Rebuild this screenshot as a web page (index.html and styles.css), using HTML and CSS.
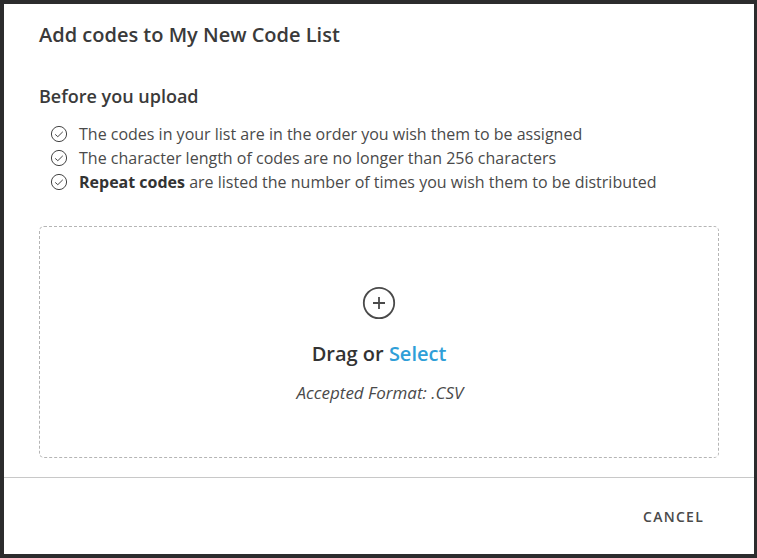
FILE: index.html
```html
<!DOCTYPE html>
<html lang="en">
<head>
<meta charset="utf-8">
<title>Add codes</title>
<link rel="stylesheet" href="styles.css">
</head>
<body>
<main class="dialog">
  <section class="content">
    <h1 class="title">Add codes to My New Code List</h1>
    <h2 class="subtitle">Before you upload</h2>
    <ul class="checks">
      <li><svg class="check" viewBox="0 0 18 18"><circle cx="9" cy="9" r="7.6"/><path d="M5.2 9.4 7.8 11.7l5-4.9"/></svg><span>The codes in your list are in the order you wish them to be assigned</span></li>
      <li><svg class="check" viewBox="0 0 18 18"><circle cx="9" cy="9" r="7.6"/><path d="M5.2 9.4 7.8 11.7l5-4.9"/></svg><span>The character length of codes are no longer than 256 characters</span></li>
      <li><svg class="check" viewBox="0 0 18 18"><circle cx="9" cy="9" r="7.6"/><path d="M5.2 9.4 7.8 11.7l5-4.9"/></svg><span><b>Repeat codes</b> are listed the number of times you wish them to be distributed</span></li>
    </ul>
    <div class="dropzone">
      <svg class="plus" viewBox="0 0 34 34"><circle cx="17" cy="17" r="15.2"/><path d="M11 17h12M17 11v12"/></svg>
      <p class="prompt">Drag or <a class="select">Select</a></p>
      <p class="format">Accepted Format: .CSV</p>
    </div>
  </section>
  <footer class="footer"><button class="cancel">CANCEL</button></footer>
</main>
</body>
</html>
```
FILE: styles.css
```css
* { box-sizing: border-box; margin: 0; padding: 0; }
body { height: 558px; background: #2c2c2d; padding: 4px 3px 4px 4px; font-family: "Open Sans", sans-serif; color: #333; overflow: hidden; }
.dialog { height: 550px; background: #fff; display: flex; flex-direction: column; }
.content { height: 473px; padding: 17px 35px 0; }
.title { font-size: 20px; line-height: 28px; font-weight: 600; color: #3a3a3a; }
.subtitle { margin-top: 34px; font-size: 18px; line-height: 26px; font-weight: 600; color: #3a3a3a; }
.checks { margin-top: 13px; padding-left: 11px; list-style: none; }
.checks li { display: flex; align-items: center; gap: 11px; height: 24px; font-size: 16px; white-space: nowrap; color: #4a4a4a; }
.checks b { color: #333; }
.check { width: 18px; height: 18px; fill: none; stroke: #444; stroke-width: 1; }
.dropzone { width: 680px; height: 232px; margin-top: 32px; border: 1px dashed #b5b5b5; border-radius: 5px; display: flex; flex-direction: column; align-items: center; padding-top: 59px; }
.plus { width: 34px; height: 34px; fill: none; stroke: #4a4a4a; stroke-width: 1.8; }
.prompt { margin-top: 20px; font-size: 20px; line-height: 28px; font-weight: 600; }
.select { color: #2f9fd8; }
.format { margin-top: 13px; padding-left: 2px; font-size: 17px; line-height: 24px; font-style: italic; color: #4a4a4a; }
.footer { flex: 1; border-top: 1px solid #c8c8c8; display: flex; justify-content: flex-end; align-items: center; padding-right: 50px; }
.cancel { border: 0; background: none; font: 600 14px "Open Sans", sans-serif; letter-spacing: 1.25px; color: #4a4a4a; }
```
